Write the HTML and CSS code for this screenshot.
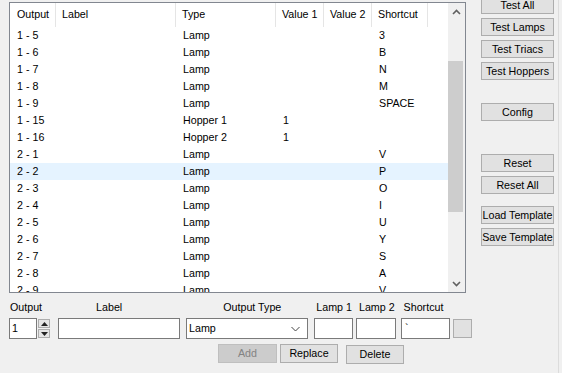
FILE: index.html
```html
<!DOCTYPE html>
<html lang="en">
<head>
    <meta charset="UTF-8">
    <title>Outputs</title>
    <link rel="stylesheet" href="styles.css">
</head>
<body>
    <div class="window">
        <div class="main">
            <div class="list">
                <div class="list-body">
                    <div class="row head">
                        <div>Output</div><div>Label</div><div>Type</div><div>Value 1</div><div>Value 2</div><div>Shortcut</div>
                    </div>
                    <div class="row"><div>1 - 5</div><div></div><div>Lamp</div><div></div><div></div><div>3</div></div>
                    <div class="row"><div>1 - 6</div><div></div><div>Lamp</div><div></div><div></div><div>B</div></div>
                    <div class="row"><div>1 - 7</div><div></div><div>Lamp</div><div></div><div></div><div>N</div></div>
                    <div class="row"><div>1 - 8</div><div></div><div>Lamp</div><div></div><div></div><div>M</div></div>
                    <div class="row"><div>1 - 9</div><div></div><div>Lamp</div><div></div><div></div><div>SPACE</div></div>
                    <div class="row"><div>1 - 15</div><div></div><div>Hopper 1</div><div>1</div><div></div><div></div></div>
                    <div class="row"><div>1 - 16</div><div></div><div>Hopper 2</div><div>1</div><div></div><div></div></div>
                    <div class="row"><div>2 - 1</div><div></div><div>Lamp</div><div></div><div></div><div>V</div></div>
                    <div class="row selected"><div>2 - 2</div><div></div><div>Lamp</div><div></div><div></div><div>P</div></div>
                    <div class="row"><div>2 - 3</div><div></div><div>Lamp</div><div></div><div></div><div>O</div></div>
                    <div class="row"><div>2 - 4</div><div></div><div>Lamp</div><div></div><div></div><div>I</div></div>
                    <div class="row"><div>2 - 5</div><div></div><div>Lamp</div><div></div><div></div><div>U</div></div>
                    <div class="row"><div>2 - 6</div><div></div><div>Lamp</div><div></div><div></div><div>Y</div></div>
                    <div class="row"><div>2 - 7</div><div></div><div>Lamp</div><div></div><div></div><div>S</div></div>
                    <div class="row"><div>2 - 8</div><div></div><div>Lamp</div><div></div><div></div><div>A</div></div>
                    <div class="row"><div>2 - 9</div><div></div><div>Lamp</div><div></div><div></div><div>V</div></div>
                </div>
                <div class="scrollbar">
                    <div class="arrow">
                        <svg width="9" height="6" viewBox="0 0 9 6"><polyline points="1,5 4.5,1.5 8,5" fill="none" stroke="#606060" stroke-width="1.6"/></svg>
                    </div>
                    <div class="track"><div class="thumb"></div></div>
                    <div class="arrow">
                        <svg width="9" height="6" viewBox="0 0 9 6"><polyline points="1,1 4.5,4.5 8,1" fill="none" stroke="#606060" stroke-width="1.6"/></svg>
                    </div>
                </div>
            </div>

            <div class="form">
                <div class="labels">
                    <span class="lbl-output">Output</span>
                    <span class="lbl-label">Label</span>
                    <span class="lbl-type">Output Type</span>
                    <span class="lbl-lamp1">Lamp 1</span>
                    <span class="lbl-lamp2">Lamp 2</span>
                    <span class="lbl-shortcut">Shortcut</span>
                </div>
                <div class="fields">
                    <div class="spin">
                        <div class="box spin-value">1</div>
                        <div class="spin-btns">
                            <div class="spin-btn"><svg width="7" height="4" viewBox="0 0 7 4"><polygon points="0,4 3.5,0 7,4" fill="#222"/></svg></div>
                            <div class="spin-btn"><svg width="7" height="4" viewBox="0 0 7 4"><polygon points="0,0 3.5,4 7,0" fill="#222"/></svg></div>
                        </div>
                    </div>
                    <div class="box field-label"></div>
                    <div class="box field-type">
                        <span>Lamp</span>
                        <svg width="9" height="6" viewBox="0 0 9 6"><polyline points="0.5,1 4.5,5 8.5,1" fill="none" stroke="#444" stroke-width="1"/></svg>
                    </div>
                    <div class="box field-lamp1"></div>
                    <div class="box field-lamp2"></div>
                    <div class="box field-shortcut">`</div>
                    <div class="btn square"></div>
                </div>
                <div class="actions">
                    <div class="btn disabled add">Add</div>
                    <div class="btn replace">Replace</div>
                    <div class="btn delete">Delete</div>
                </div>
            </div>
        </div>

        <div class="side">
            <div class="btn">Test All</div>
            <div class="btn">Test Lamps</div>
            <div class="btn">Test Triacs</div>
            <div class="btn">Test Hoppers</div>
            <div class="btn config">Config</div>
            <div class="btn reset">Reset</div>
            <div class="btn">Reset All</div>
            <div class="btn load">Load Template</div>
            <div class="btn">Save Template</div>
        </div>
    </div>
</body>
</html>
```

FILE: styles.css
```css
body {
    margin: 0;
    background: #f0f0f0;
    font-family: "Liberation Sans", Arial, sans-serif;
    font-size: 10.7px;
    color: #000;
    overflow: hidden;
}

.window {
    display: flex;
    width: 558px;
    height: 373px;
    border-right: 1px solid #dcdcdc;
}

/* List view */
.main {
    flex: none;
    width: 457px;
    padding-left: 9px;
    padding-top: 2px;
}

.list {
    display: flex;
    width: 455px;
    height: 289px;
    border: 1px solid #828790;
    background: #fff;
}

.list-body {
    width: 438px;
    overflow: hidden;
}

.row {
    display: grid;
    grid-template-columns: 46px 120px 100px 48px 48px 56px;
    height: 17px;
    line-height: 17px;
    white-space: nowrap;
}

.row div {
    padding-left: 7px;
    overflow: hidden;
}

.row.head {
    height: 24px;
    line-height: 23px;
}

.row.head div {
    padding-left: 6px;
    border-right: 1px solid #e5e5e5;
}

.row.head div:first-child {
    padding-left: 7px;
}

.row.selected {
    background: #e5f3ff;
}

/* Scrollbar */
.scrollbar {
    width: 17px;
    display: flex;
    flex-direction: column;
    background: #f0f0f0;
}

.arrow {
    height: 17px;
    display: flex;
    align-items: center;
    justify-content: center;
}

.track {
    flex: 1;
    padding-top: 41px;
}

.thumb {
    width: 15px;
    height: 151px;
    background: #cdcdcd;
}

/* Form */
.form {
    width: 480px;
    padding-top: 7px;
}

.labels {
    display: flex;
    height: 14px;
    line-height: 14px;
    white-space: nowrap;
}

.lbl-output { margin-left: 1px; }
.lbl-label { margin-left: 54px; }
.lbl-type { margin-left: 101px; }
.lbl-lamp1 { margin-left: 35px; }
.lbl-lamp2 { margin-left: 7px; }
.lbl-shortcut { margin-left: 9px; }

.fields {
    display: flex;
    margin-top: 4px;
    height: 21px;
}

.box {
    box-sizing: border-box;
    height: 21px;
    border: 1px solid #7a7a7a;
    background: #fff;
    line-height: 19px;
    padding-left: 2px;
}

.spin {
    display: flex;
}

.spin-value {
    width: 28px;
}

.spin-btns {
    display: flex;
    flex-direction: column;
    gap: 1px;
    margin-left: 1px;
    padding-top: 1px;
}

.spin-btn {
    box-sizing: border-box;
    width: 12px;
    height: 9px;
    border: 1px solid #adadad;
    background: #e5e5e5;
    display: flex;
    align-items: center;
    justify-content: center;
}

.field-label { width: 122px; margin-left: 8px; }

.field-type {
    width: 122px;
    margin-left: 6px;
    display: flex;
    justify-content: space-between;
    align-items: center;
    padding-right: 7px;
}

.field-lamp1 { width: 39px; margin-left: 6px; }
.field-lamp2 { width: 40px; margin-left: 3px; }
.field-shortcut { width: 49px; margin-left: 5px; padding-left: 3px; }

.btn {
    box-sizing: border-box;
    height: 19px;
    line-height: 17px;
    border: 1px solid #adadad;
    background: #e1e1e1;
    text-align: center;
    white-space: nowrap;
}

.square {
    width: 19px;
    height: 19px;
    margin-left: 3px;
    margin-top: 1px;
}

.actions {
    display: flex;
    margin-top: 5px;
}

.add { width: 59px; margin-left: 209px; }
.replace { width: 58px; margin-left: 3px; }
.delete { width: 58px; margin-left: 8px; margin-top: 1px; }

.btn.disabled {
    background: #cccccc;
    border-color: #bfbfbf;
    color: #838383;
}

/* Side buttons */
.side {
    display: flex;
    flex-direction: column;
    gap: 4px;
    margin-left: 15px;
    margin-top: -4px;
}

.side .btn {
    width: 73px;
    height: 18px;
    line-height: 16px;
}

.side .config { margin-top: 19px; }
.side .reset { margin-top: 29px; }
.side .load { margin-top: 8px; }
```
